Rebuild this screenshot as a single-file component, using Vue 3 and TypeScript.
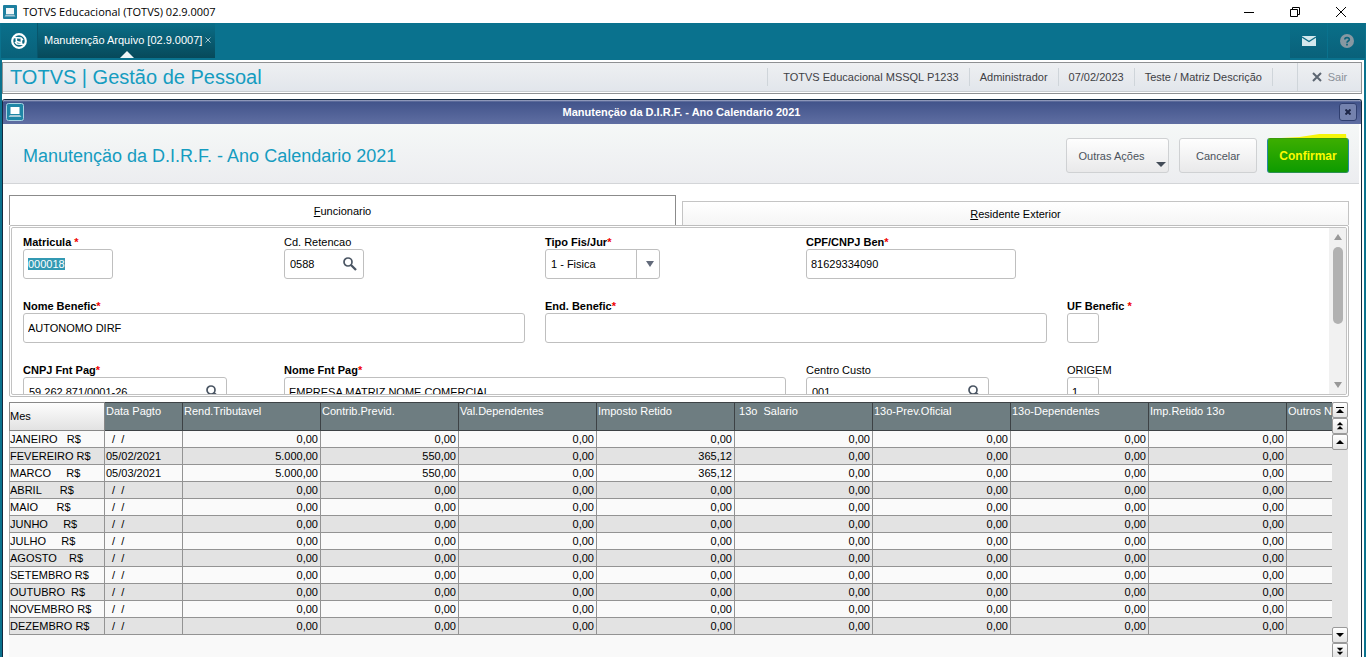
<script setup lang="ts">
import { onMounted, ref } from 'vue'

interface Field {
  id: string
  label: string
  value: string
  required?: boolean
  spaced?: boolean
  size: string
  kind?: 'search' | 'select'
}

const fields: Field[] = [
  { id: 'matricula', label: 'Matricula', value: '000018', required: true, spaced: true, size: 'w90' },
  { id: 'retencao', label: 'Cd. Retencao', value: '0588', size: 'w80', kind: 'search' },
  { id: 'tipo', label: 'Tipo Fis/Jur', value: '1 - Fisica', required: true, size: 'w115', kind: 'select' },
  { id: 'cpf', label: 'CPF/CNPJ Ben', value: '81629334090', required: true, size: 'w210' },
  { id: 'nome', label: 'Nome Benefic', value: 'AUTONOMO DIRF', required: true, size: 'wide new-row' },
  { id: 'endereco', label: 'End. Benefic', value: '', required: true, size: 'wide' },
  { id: 'uf', label: 'UF Benefic', value: '', required: true, spaced: true, size: 'w32' },
  { id: 'cnpjfonte', label: 'CNPJ Fnt Pag', value: '59.262.871/0001-26', required: true, size: 'w204', kind: 'search' },
  { id: 'nomefonte', label: 'Nome Fnt Pag', value: 'EMPRESA MATRIZ NOME COMERCIAL', required: true, size: 'wide' },
  { id: 'centro', label: 'Centro Custo', value: '001', size: 'w183', kind: 'search' },
  { id: 'origem', label: 'ORIGEM', value: '1', size: 'w32' },
]

const columns = [
  'Data Pagto', 'Rend.Tributavel', 'Contrib.Previd.', 'Val.Dependentes', 'Imposto Retido',
  ' 13o  Salario', '13o-Prev.Oficial', '13o-Dependentes', 'Imp.Retido 13o', 'Outros N',
]

const zero = '0,00'
const blank = '  /  /'
const paid = ['5.000,00', '550,00', zero, '365,12', zero, zero, zero, zero]
const none = Array<string>(8).fill(zero)
const rows = [
  { month: 'JANEIRO   R$', date: blank, values: none },
  { month: 'FEVEREIRO R$', date: '05/02/2021', values: paid },
  { month: 'MARCO     R$', date: '05/03/2021', values: paid },
  { month: 'ABRIL      R$', date: blank, values: none },
  { month: 'MAIO      R$', date: blank, values: none },
  { month: 'JUNHO     R$', date: blank, values: none },
  { month: 'JULHO     R$', date: blank, values: none },
  { month: 'AGOSTO    R$', date: blank, values: none },
  { month: 'SETEMBRO R$', date: blank, values: none },
  { month: 'OUTUBRO  R$', date: blank, values: none },
  { month: 'NOVEMBRO R$', date: blank, values: none },
  { month: 'DEZEMBRO R$', date: blank, values: none },
]

const form = ref<HTMLElement | null>(null)
onMounted(() => {
  const first = form.value?.querySelector<HTMLInputElement>('input')
  first?.focus()
  first?.select()
})
</script>

<template>
  <div class="app">
    <header class="titlebar">
      <svg class="app-icon" viewBox="0 0 14 14">
        <rect width="14" height="14" rx="1" fill="#1c7f9f" />
        <rect x="3" y="3" width="8" height="6" fill="#f2f7f9" />
        <path d="M3 9.500h8l1.500 2h-11z" fill="#a5c8d5" />
      </svg>
      <span class="app-name">TOTVS Educacional (TOTVS) 02.9.0007</span>
      <button class="win" aria-label="Minimizar"><svg viewBox="0 0 10 10"><path d="M0 5.5h10" /></svg></button>
      <button class="win" aria-label="Restaurar"><svg viewBox="0 0 10 10"><path d="M.5 2.5h7v7h-7zM2.500 2.500v-2h7v7h-2" /></svg></button>
      <button class="win" aria-label="Fechar"><svg viewBox="0 0 10 10"><path d="M0 0l10 10M10 0L0 10" /></svg></button>
    </header>

    <nav class="tabbar">
      <button class="home" aria-label="Início">
        <svg viewBox="0 0 16 16">
          <circle cx="8" cy="8" r="6.800" fill="none" stroke="#fff" stroke-width="2.200" />
          <path d="M3 4.500L10 5l2 2M4 9l2 2 7 .5M5.200 5l.3 3.500 5 1.200L10.300 6" fill="none" stroke="#fff" stroke-width="1.600" />
        </svg>
      </button>
      <div class="open-tab">
        <span>Manutenção Arquivo [02.9.0007]</span>
        <button aria-label="Fechar aba"><svg viewBox="0 0 6 6"><path d="M.5.5l5 5M5.500.5l-5 5" /></svg></button>
      </div>
      <span class="grow"></span>
      <button class="tool" aria-label="Mensagens">
        <svg viewBox="0 0 14 10"><rect width="14" height="10" fill="#d4e8ed" /><path d="M0 1l7 4.500L14 1" fill="none" stroke="#0a6a84" stroke-width="1.300" /></svg>
      </button>
      <button class="tool" aria-label="Ajuda">
        <svg class="help" viewBox="0 0 14 14"><circle cx="7" cy="7" r="7" fill="#8798a2" /><path d="M4.800 5.600C4.800 2.900 9.300 2.900 9.300 5.400 9.300 7 7 7 7 8.700M7 9.800v1.700" fill="none" stroke="#0a637c" stroke-width="1.700" /></svg>
      </button>
    </nav>

    <main class="frame">
      <section class="sysbar">
        <h1>TOTVS | Gestão de Pessoal</h1>
        <ul>
          <li>TOTVS Educacional MSSQL P1233</li>
          <li>Administrador</li>
          <li>07/02/2023</li>
          <li>Teste / Matriz Descrição</li>
          <li class="empty"></li>
        </ul>
        <button class="exit">
          <svg viewBox="0 0 10 10"><path d="M1 1l8 8M9 1L1 9" stroke="#5c6672" stroke-width="2" /></svg>Sair
        </button>
      </section>

      <section class="dialog">
        <header class="caption">
          <svg class="cap-icon" viewBox="0 0 18 18">
            <rect x=".5" y=".5" width="17" height="17" rx="2" fill="#1f86a6" stroke="#a9d3e2" />
            <rect x="4.500" y="4" width="9" height="7" fill="#fff" />
            <path d="M4 12h10l1.500 2h-13z" fill="#a9cbd8" />
          </svg>
          <strong>Manutençäo da D.I.R.F. - Ano Calendario 2021</strong>
          <button aria-label="Fechar janela"><svg viewBox="0 0 6 6"><path d="M.5.5l5 5M5.500.5l-5 5" /></svg></button>
        </header>

        <div class="actions">
          <h2>Manutençäo da D.I.R.F. - Ano Calendario 2021</h2>
          <button class="btn more">Outras Ações<svg viewBox="0 0 10 5"><path d="M0 0h10L5 5z" /></svg></button>
          <button class="btn cancel">Cancelar</button>
          <div class="confirm-box">
            <svg viewBox="0 0 84 40" preserveAspectRatio="none"><path d="M5 4.500L33 3 53 0h27l1 13 2 1v18l-3 4-30-1z" fill="#f6f60a" /></svg>
            <button class="btn confirm">Confirmar</button>
          </div>
        </div>

        <div class="content">
          <div class="tabs" role="tablist">
            <button role="tab" class="tab active" aria-selected="true"><span><u>F</u>uncionario</span></button>
            <button role="tab" class="tab" aria-selected="false"><span><u>R</u>esidente Exterior</span></button>
          </div>

          <div class="panel">
            <div class="panel-in">
              <form ref="form" class="form" @submit.prevent>
                <div v-for="f in fields" :key="f.id" class="field" :class="f.size">
                  <label :for="f.id" :class="{ req: f.required }">{{ f.label }}<template v-if="f.spaced">&nbsp;</template><i v-if="f.required">*</i></label>
                  <div class="control" :class="f.kind">
                    <select v-if="f.kind === 'select'" :id="f.id"><option>{{ f.value }}</option></select>
                    <input v-else :id="f.id" type="text" :value="f.value" />
                    <svg v-if="f.kind === 'select'" class="drop" viewBox="0 0 8 6"><path d="M0 0h8L4 6z" /></svg>
                    <button v-if="f.kind === 'search'" type="button" aria-label="Pesquisar">
                      <svg viewBox="0 0 14 14"><circle cx="5" cy="5" r="4" fill="none" stroke="#4a5563" stroke-width="1.700" /><path d="M8 8l5 5" stroke="#4a5563" stroke-width="2.300" /></svg>
                    </button>
                  </div>
                </div>
              </form>
              <div class="scroll">
                <svg viewBox="0 0 8 6"><path d="M0 6h8L4 0z" /></svg>
                <div class="thumb"></div>
                <span class="grow"></span>
                <svg viewBox="0 0 8 6"><path d="M0 0h8L4 6z" /></svg>
              </div>
            </div>
          </div>

          <div class="grid">
            <div class="table-box">
              <table>
                <colgroup>
                  <col class="c-month" /><col class="c-date" /><col v-for="n in 8" :key="n" class="c-val" /><col />
                </colgroup>
                <thead>
                  <tr><th class="mes">Mes</th><th v-for="c in columns" :key="c">{{ c }}</th></tr>
                </thead>
                <tbody>
                  <tr v-for="r in rows" :key="r.month">
                    <td class="month">{{ r.month }}</td>
                    <td>{{ r.date }}</td>
                    <td v-for="(v, i) in r.values" :key="i" class="num">{{ v }}</td>
                    <td></td>
                  </tr>
                </tbody>
              </table>
            </div>
            <div class="rail">
              <button aria-label="Primeiro"><svg viewBox="0 0 8 8"><path d="M0 1h8v1H0zM4 3l4 4H0z" /></svg></button>
              <button aria-label="Página anterior"><svg viewBox="0 0 8 10"><path d="M4 0l4 4H0zM4 5l4 4H0z" /></svg></button>
              <button aria-label="Linha anterior"><svg viewBox="0 0 8 8"><path d="M4 2l4 4H0z" /></svg></button>
              <span class="grow"></span>
              <button aria-label="Próxima linha"><svg viewBox="0 0 8 8"><path d="M0 2h8L4 6z" /></svg></button>
              <button class="last" aria-label="Próxima página"><svg viewBox="0 0 8 10"><path d="M0 1h8L4 5zM0 6h8l-4 4z" /></svg></button>
            </div>
          </div>
        </div>
      </section>
    </main>
  </div>
</template>

<style>
html, body { margin: 0; background: #fff; }
</style>

<style scoped>
* { box-sizing: border-box; }
.app { display: flex; flex-direction: column; height: 100vh; min-height: 640px; overflow: hidden; font: 11px/14px "Liberation Sans", Arial, sans-serif; color: #000; }
button { padding: 0; border: 0; background: none; font: inherit; color: inherit; display: flex; align-items: center; justify-content: center; }
svg { display: block; flex: none; }
h1, h2, ul { margin: 0; padding: 0; font-weight: 400; list-style: none; }
.grow { flex: 1; }

.titlebar { display: flex; align-items: center; flex: none; height: 23px; padding-left: 3px; background: #fff; }
.app-icon { width: 14px; height: 14px; margin-right: 6px; }
.app-name { flex: 1; font: 11px/16px "Open Sans", "Noto Sans", sans-serif; }
.win { width: 46px; height: 22px; }
.win svg { width: 10px; height: 10px; fill: none; stroke: #000; stroke-width: 1; }
.titlebar { padding-right: 2px; }

.tabbar { display: flex; flex: none; height: 37px; padding: 0 1px 2px; background: #0a728e; }
.home { width: 37px; border-right: 1px solid #08566c; background: linear-gradient(#0a708b, #09617a); }
.home svg { width: 16px; height: 16px; }
.open-tab { position: relative; display: flex; align-items: center; gap: 3px; padding: 0 4px 2px 6px; background: linear-gradient(#0a6e88, #07495a); color: #fff; }
.open-tab::after { content: ""; position: absolute; left: 50%; bottom: 0; margin-left: -7px; border: 7px solid transparent; border-top: 0; border-bottom-color: #f1f6f7; }
.open-tab svg { width: 6px; height: 6px; stroke: #9fc3ce; fill: none; }
.tool { width: 37px; margin-left: 1px; background: linear-gradient(#0a6f89, #09617a); }
.tool svg { width: 14px; height: 10px; }
.tool .help { height: 14px; }

.frame { display: flex; flex-direction: column; flex: 1; min-height: 0; padding: 2px 2px 0 0; border: solid #0a728e; border-width: 0 2px; background: #fff; }
.sysbar { display: flex; align-items: center; flex: none; height: 32px; margin-bottom: 5px; padding-bottom: 2px; border: 1px solid #8e9092; background: linear-gradient(#eef0f2, #e1e5eb); color: #3e4145; box-shadow: inset 0 -1px #fff, inset 0 -2px #c9cdd1; }
.sysbar h1 { flex: 1; padding-left: 7px; font-size: 20px; line-height: 24px; color: #159cc0; }
.sysbar ul { display: flex; }
.sysbar li { padding: 0 10px; border-left: 1px solid #cfd5da; line-height: 18px; }
.sysbar li:first-child { padding-left: 15px; }
.sysbar .empty { width: 25px; padding: 0; }
.exit { gap: 6px; width: 64px; height: 28px; border-left: 1px solid #cfd5da; color: #8b9199; }
.exit svg { width: 10px; height: 10px; }

.dialog { display: flex; flex-direction: column; flex: 1; min-height: 0; border: 1px solid #14293f; border-bottom: 0; border-radius: 3px 3px 0 0; background: #fff; overflow: hidden; }
.caption { display: flex; align-items: center; flex: none; height: 24px; padding: 0 4px 0 3px; background: linear-gradient(#a5adc8 0, #42548b 2px, #5f6ea2); color: #fff; }
.caption strong { flex: 1; text-align: center; }
.cap-icon { width: 18px; height: 18px; }
.caption button { width: 18px; height: 18px; border: 1px solid #303f70; border-radius: 3px; background: #7482ae; }
.caption button svg { width: 6px; height: 6px; stroke: #1d2647; stroke-width: 2; }

.actions { display: flex; align-items: center; flex: none; gap: 10px; height: 60px; margin-right: 2px; padding: 4px 10px 0 20px; border-bottom: 1px solid #d3d5d8; background: linear-gradient(#f5f8f7, #ecedf0); }
.actions h2 { flex: 1; font-size: 18px; line-height: 24px; color: #159cc0; }
.btn { height: 35px; border: 1px solid #cfd1d3; border-radius: 3px; background: linear-gradient(#fefefe, #e9e9ea); color: #4c535c; }
.more { position: relative; width: 103px; padding-right: 12px; }
.more svg { position: absolute; right: 2px; bottom: 5px; width: 10px; height: 5px; fill: #434c58; }
.cancel { width: 78px; }
.confirm-box { position: relative; width: 82px; }
.confirm-box svg { position: absolute; left: 0; top: -4px; width: 83px; height: 40px; }
.confirm { position: relative; width: 82px; border-color: #3c9a0c #2789a3 #2b8f52; background: linear-gradient(#3cae00, #0e9b00); color: #fbfb00; font-size: 12px; font-weight: 700; }

.content { display: flex; flex-direction: column; flex: 1; min-height: 0; padding: 11px 12px 0 6px; }
.tabs { display: flex; align-items: flex-end; flex: none; gap: 6px; height: 30px; }
.tab { flex: 1; height: 24px; border: 1px solid #c4c4c4; border-bottom: 0; background: linear-gradient(#fff, #f5f5f5); }
.tab.active { height: 30px; border-color: #8b8b8b; background: #fff; }

.panel { flex: none; height: 172px; padding: 1px; border: 1px solid #bdbdbd; border-radius: 2px; }
.panel-in { display: flex; height: 100%; border: 1px solid #c2c2c2; border-radius: 2px; overflow: hidden; }
.form { display: grid; flex: 1; grid-template-columns: repeat(5, 1fr); grid-auto-rows: 44px; gap: 20px 0; padding: 7px 1px 0 11px; }
.field label { display: block; height: 14px; white-space: nowrap; }
.field .req { font-weight: 700; }
.field i { color: #f00000; font-style: normal; }
.control { position: relative; display: flex; height: 30px; }
.wide { grid-column: span 2; margin-right: 20px; }
.new-row { grid-column: 1 / span 2; }
.w32 .control { width: 32px; }
.w80 .control { width: 80px; }
.w90 .control { width: 90px; }
.w115 .control { width: 115px; }
.w183 .control { width: 183px; }
.w204 .control { width: 204px; }
.w210 .control { width: 210px; }
input, select { width: 100%; height: 30px; margin: 0; padding: 0 4px; border: 1px solid #bfbfbf; border-radius: 3px; background: #fff; font: inherit; color: #000; outline: none; appearance: none; }
.search input, .select select { padding-left: 5px; }
input::selection { background: #3399b3; color: #fff; }
.control button { position: absolute; right: 6px; top: 7px; width: 16px; height: 16px; }
.control button svg { width: 14px; height: 14px; }
.select::after { content: ""; position: absolute; right: 23px; top: 1px; bottom: 1px; width: 1px; background: #bfbfbf; }
.drop { position: absolute; right: 6px; top: 12px; width: 8px; height: 6px; fill: #626a7a; }
.scroll { display: flex; flex-direction: column; align-items: center; width: 17px; padding: 6px 0; background: #f1f1f1; }
.scroll svg { width: 8px; height: 6px; fill: #989898; }
.thumb { width: 10px; height: 77px; margin-top: 7px; border-radius: 5px; background: #b1b1b1; }

.grid { display: flex; flex: 1; min-height: 0; margin: 5px 1px 0 0; background: #f9f9f9; }
.table-box { flex: 1; min-width: 0; overflow: hidden; }
table { width: 100%; table-layout: fixed; border-collapse: separate; border-spacing: 0; }
.c-month { width: 96px; }
.c-date { width: 78px; }
.c-val { width: 138px; }
th, td { padding: 0 2px 0 1px; white-space: pre; overflow: hidden; text-align: left; font-weight: 400; }
th { height: 29px; padding-top: 2px; vertical-align: top; border: solid #3d4245; border-width: 1px 1px 1px 0; background: #6e7d81; color: #fff; line-height: 13px; }
th.mes { padding: 0; vertical-align: middle; border-left: 1px solid #888; border-color: #888; background: linear-gradient(#fdfdfd, #e2e2e2); color: #000; }
td { height: 17px; border-right: 1px solid #939393; border-bottom: 1px solid #939393; line-height: 16px; }
td:last-child, th:last-child { border-right: 0; padding-right: 0; }
.month { padding: 0; border-left: 1px solid #aaa; }
.num { text-align: right; }
tbody tr:nth-child(odd) { background: #fafafa; }
tbody tr:nth-child(even) { background: #e3e3e3; }
.rail { display: flex; flex-direction: column; width: 16px; background: #e3e3e3; }
.rail button { flex: none; height: 16px; border: 1px solid #9a9a9a; border-radius: 2px; background: linear-gradient(#fff, #e4e4e4); }
.rail svg { width: 8px; height: 8px; }
.rail .last { height: 14px; border-bottom: 0; border-radius: 2px 2px 0 0; }
</style>
